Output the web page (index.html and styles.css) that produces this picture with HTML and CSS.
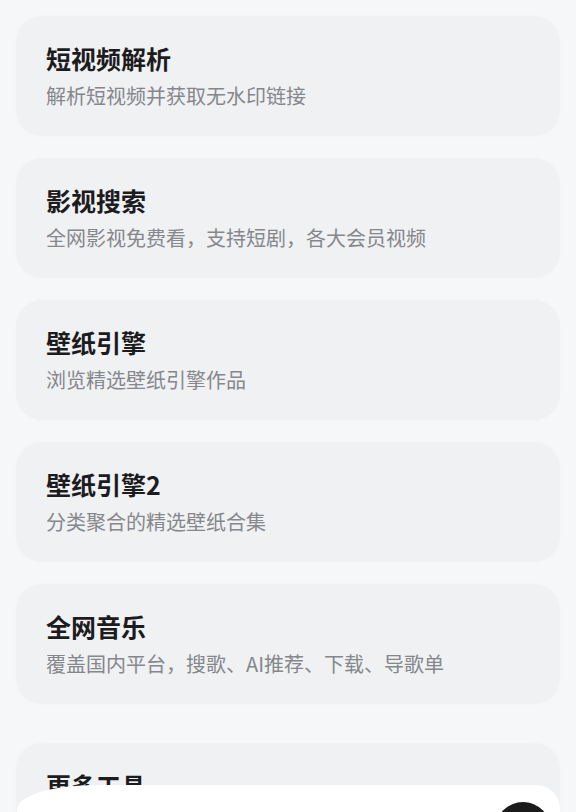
FILE: index.html
```html
<!DOCTYPE html>
<html lang="zh-CN">

<head>
  <meta charset="UTF-8">
  <meta name="viewport" content="width=device-width, initial-scale=1.0">
  <title>工具箱</title>
  <link rel="stylesheet" href="styles.css">
</head>

<body>
  <div class="page">
    <div class="section">
      <div class="card">
        <h3 class="card-title">短视频解析</h3>
        <p class="card-desc">解析短视频并获取无水印链接</p>
      </div>
      <div class="card">
        <h3 class="card-title">影视搜索</h3>
        <p class="card-desc">全网影视免费看，支持短剧，各大会员视频</p>
      </div>
      <div class="card">
        <h3 class="card-title">壁纸引擎</h3>
        <p class="card-desc">浏览精选壁纸引擎作品</p>
      </div>
      <div class="card">
        <h3 class="card-title">壁纸引擎2</h3>
        <p class="card-desc">分类聚合的精选壁纸合集</p>
      </div>
      <div class="card">
        <h3 class="card-title">全网音乐</h3>
        <p class="card-desc">覆盖国内平台，搜歌、AI推荐、下载、导歌单</p>
      </div>
    </div>
    <div class="section section-more">
      <div class="card">
        <h3 class="card-title">更多工具</h3>
        <p class="card-desc">持续更新中</p>
      </div>
    </div>
  </div>

  <div class="bottom-bar">
    <span class="fab"></span>
  </div>
</body>

</html>
```

FILE: styles.css
```css
* {
  padding: 0;
  margin: 0;
  box-sizing: border-box;
}

body {
  background-color: #f6f7f9;
  font-family: "Noto Sans CJK SC", "Noto Sans", sans-serif;
}

.page {
  padding: 16px;
}

.section {
  display: flex;
  flex-direction: column;
  gap: 22px;
}

.section-more {
  margin-top: 39px;
}

.card {
  height: 120px;
  padding: 26px 30px 0;
  background-color: #f0f1f3;
  border-radius: 26px;
  box-shadow: 0 0 6px rgba(0, 0, 0, .015);
}

.card-title {
  font-size: 25px;
  line-height: 32px;
  font-weight: 700;
  color: #1c1c1e;
}

.card-desc {
  margin-top: 8px;
  font-size: 20px;
  line-height: 28px;
  color: #85878b;
}

.bottom-bar {
  position: fixed;
  top: 785px;
  left: 17px;
  right: 16px;
  height: 90px;
  background-color: #fff;
  border-top-left-radius: 80px 24px;
  border-top-right-radius: 24px;
}

.fab {
  position: absolute;
  top: 17px;
  right: 9px;
  width: 56px;
  height: 56px;
  border-radius: 50%;
  background-color: #1b1b1b;
}
```
